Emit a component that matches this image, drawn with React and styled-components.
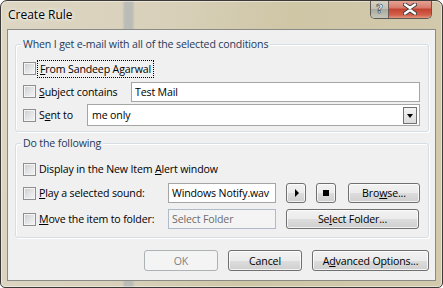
import React from 'react';
import styled, { createGlobalStyle } from 'styled-components';

const Global = createGlobalStyle`
  html, body { margin: 0; padding: 0; background: #fff; }
  body {
    font-family: "Open Sans", "Noto Sans", sans-serif;
    font-size: 10.6px;
    letter-spacing: -0.15px;
    color: #000;
  }
`;

const Window = styled.div`
  box-sizing: border-box;
  width: 443px;
  height: 288px;
  border: 1px solid #3c3a36;
  border-radius: 7px 7px 5px 5px;
  display: flex;
  flex-direction: column;
  background:
    linear-gradient(90deg, rgba(0,0,0,0) 0, rgba(0,0,0,0) 121px, rgba(165,174,180,0.6) 124px, rgba(165,174,180,0.6) 131px, rgba(0,0,0,0) 134px),
    linear-gradient(100deg, #ddd6c3 0%, #d8d0b9 35%, #cfc6a6 60%, #d3caae 100%);
  box-shadow: inset 0 0 0 1px rgba(255,255,255,0.45);
  overflow: hidden;
`;

const TitleBar = styled.div`
  height: 28px;
  display: flex;
  align-items: flex-start;
  justify-content: space-between;
  padding: 0 10px 0 7px;
`;

const Title = styled.span`
  font-family: "Open Sans", "Noto Sans", sans-serif;
  font-size: 12px;
  letter-spacing: 0;
  line-height: 28px;
  color: #000;
  text-shadow: 0 0 6px rgba(255,255,255,0.9), 0 0 3px rgba(255,255,255,0.9);
`;

const Caption = styled.div`
  display: flex;
  margin-top: -1px;
  border: 1px solid #5c5a52;
  border-top: none;
  border-radius: 0 0 5px 5px;
  overflow: hidden;
  height: 18px;
`;

const HelpBtn = styled.div`
  width: 17px;
  display: flex;
  align-items: center;
  justify-content: center;
  background: linear-gradient(#d8d4c8 0%, #c2bfb4 50%, #a8a89c 51%, #c6c6bc 100%);
  border-right: 1px solid #6b5c58;
  font-family: "DejaVu Sans", sans-serif;
  font-weight: bold;
  font-size: 12px;
  color: #fff;
  -webkit-text-stroke: 0.6px #3a3a3a;
`;

const CloseBtn = styled.div`
  width: 42px;
  display: flex;
  align-items: center;
  justify-content: center;
  background: linear-gradient(#e8a89c 0%, #d77a68 45%, #c2412e 50%, #d4644c 85%, #e29a80 100%);
`;

const Client = styled.div`
  margin: 0 6px;
  height: 252px;
  box-sizing: border-box;
  border: 1px solid #8a8a86;
  background: #f0f0f0;
  padding: 14px 6px 0 7px;
  display: flex;
  flex-direction: column;
`;

const Group = styled.div`
  position: relative;
  border: 1px solid #d5dfe5;
  border-radius: 3px;
  box-shadow: 1px 1px 0 #fff, inset 1px 1px 0 #fff;
  padding: ${p => p.$pad};
  margin-top: ${p => p.$mt || 0}px;
  display: flex;
  flex-direction: column;
`;

const Legend = styled.span`
  position: absolute;
  top: -9px;
  left: 5px;
  padding: 0 2px;
  background: #f0f0f0;
  color: #1e395b;
  line-height: 16px;
`;

const Row = styled.div`
  height: ${p => p.$h}px;
  display: flex;
  align-items: center;
`;

const Check = styled.label`
  width: ${p => p.$w}px;
  flex: none;
  display: flex;
  align-items: center;
  gap: 3px;
  white-space: nowrap;
`;

const Box = styled.span`
  box-sizing: border-box;
  width: 13px;
  height: 13px;
  flex: none;
  border: 1px solid #8e8f8f;
  box-shadow: inset 0 0 0 1px #f4f4f4;
  background: linear-gradient(135deg, #c9ccd1 0%, #e2e3e5 50%, #f6f6f6 100%);
`;

const Focus = styled.span`
  outline: 1px dotted #000;
  outline-offset: 1px;
  padding: 0 1px;
`;

const Field = styled.input`
  box-sizing: border-box;
  width: ${p => p.$w}px;
  height: ${p => p.$h || 20}px;
  margin: 0;
  padding: 0 3px;
  border: 1px solid ${p => (p.disabled ? '#afbbcb' : '#a5a5a5')};
  background: ${p => (p.disabled ? '#f4f4f4' : '#fff')};
  font: inherit;
  letter-spacing: inherit;
  color: ${p => (p.disabled ? '#6d6d6d' : '#000')};
  outline: none;
  -webkit-text-fill-color: ${p => (p.disabled ? '#6d6d6d' : '#000')};
  opacity: 1;
`;

const Combo = styled.div`
  box-sizing: border-box;
  width: 333px;
  height: 22px;
  border: 1px solid #a5a5a5;
  background: #fff;
  display: flex;
  align-items: center;
  justify-content: space-between;
  padding: 0 4px 0 4px;
`;

const DropBtn = styled.span`
  box-sizing: border-box;
  width: 14px;
  height: 17px;
  border: 1px solid #707070;
  background: linear-gradient(#f2f2f2, #dcdcdc);
  display: flex;
  align-items: center;
  justify-content: center;
  margin-right: -2px;
`;

const Button = styled.button`
  box-sizing: border-box;
  width: ${p => p.$w}px;
  height: ${p => p.$h || 21}px;
  margin: 0 0 0 ${p => p.$ml || 0}px;
  padding: 0;
  border: 1px solid ${p => (p.disabled ? '#adb2b5' : '#707070')};
  border-radius: 3px;
  background: ${p =>
    p.disabled
      ? '#f4f4f4'
      : 'linear-gradient(#f2f2f2 0%, #ebebeb 50%, #dddddd 51%, #cfcfcf 100%)'};
  box-shadow: inset 0 0 0 1px ${p => (p.disabled ? '#f4f4f4' : 'rgba(255,255,255,0.75)')};
  font: inherit;
  letter-spacing: inherit;
  color: ${p => (p.disabled ? '#838383' : '#000')};
  display: flex;
  align-items: center;
  justify-content: center;
`;

const ButtonBar = styled.div`
  display: flex;
  justify-content: flex-end;
  margin-top: 12px;
`;

const Tri = styled.span`
  width: 0;
  height: 0;
  border-top: 4px solid transparent;
  border-bottom: 4px solid transparent;
  border-left: 4px solid #000;
  margin-left: 1px;
`;

const Sq = styled.span`
  width: 6px;
  height: 6px;
  background: #000;
`;

const Down = styled.span`
  width: 0;
  height: 0;
  border-left: 3.5px solid transparent;
  border-right: 3.5px solid transparent;
  border-top: 4px solid #000;
  margin-top: 2px;
`;

export default function App() {
  return (
    <>
      <Global />
      <Window>
        <TitleBar>
          <Title>Create Rule</Title>
          <Caption>
            <HelpBtn>?</HelpBtn>
            <CloseBtn>
              <svg width="14" height="12" viewBox="0 0 14 12">
                <path d="M2 1.5 L7 5 L12 1.5 M2 10.5 L7 7 L12 10.5" stroke="#3b3b3b" strokeWidth="4.2" strokeLinecap="round" fill="none" />
                <path d="M2 1.5 L7 5 L12 1.5 M2 10.5 L7 7 L12 10.5" stroke="#fff" strokeWidth="2.4" strokeLinecap="round" fill="none" />
              </svg>
            </CloseBtn>
          </Caption>
        </TitleBar>
        <Client>
          <Group $pad="12px 7px 4px 7px">
            <Legend>When I get e-mail with all of the selected conditions</Legend>
            <Row $h={23}>
              <Check $w={150}>
                <Box />
                <Focus><u>F</u>rom Sandeep Agarwal</Focus>
              </Check>
            </Row>
            <Row $h={23}>
              <Check $w={108}>
                <Box />
                <span><u>S</u>ubject contains</span>
              </Check>
              <Field $w={289} $h={20} readOnly value="Test Mail" />
            </Row>
            <Row $h={24}>
              <Check $w={64}>
                <Box />
                <span>S<u>e</u>nt to</span>
              </Check>
              <Combo>
                <span>me only</span>
                <DropBtn><Down /></DropBtn>
              </Combo>
            </Row>
          </Group>
          <Group $pad="13px 7px 4px 7px" $mt={11}>
            <Legend>Do the following</Legend>
            <Row $h={24}>
              <Check $w={300}>
                <Box />
                <span>Display in the New Item <u>A</u>lert window</span>
              </Check>
            </Row>
            <Row $h={24}>
              <Check $w={145}>
                <Box />
                <span><u>P</u>lay a selected sound:</span>
              </Check>
              <Field $w={108} readOnly value="Windows Notify.wav" />
              <Button $w={20} $h={20} $ml={10}><Tri /></Button>
              <Button $w={20} $h={20} $ml={10}><Sq /></Button>
              <Button $w={72} $h={20} $ml={12}>Bro<u>w</u>se...</Button>
            </Row>
            <Row $h={28}>
              <Check $w={145}>
                <Box />
                <span><u>M</u>ove the item to folder:</span>
              </Check>
              <Field $w={108} disabled readOnly value="Select Folder" />
              <Button $w={133} $h={20} $ml={10}>Se<u>l</u>ect Folder...</Button>
            </Row>
          </Group>
          <ButtonBar>
            <Button $w={74} disabled>OK</Button>
            <Button $w={74} $ml={10}>Cancel</Button>
            <Button $w={117} $ml={10}>A<u>d</u>vanced Options...</Button>
          </ButtonBar>
        </Client>
      </Window>
    </>
  );
}
